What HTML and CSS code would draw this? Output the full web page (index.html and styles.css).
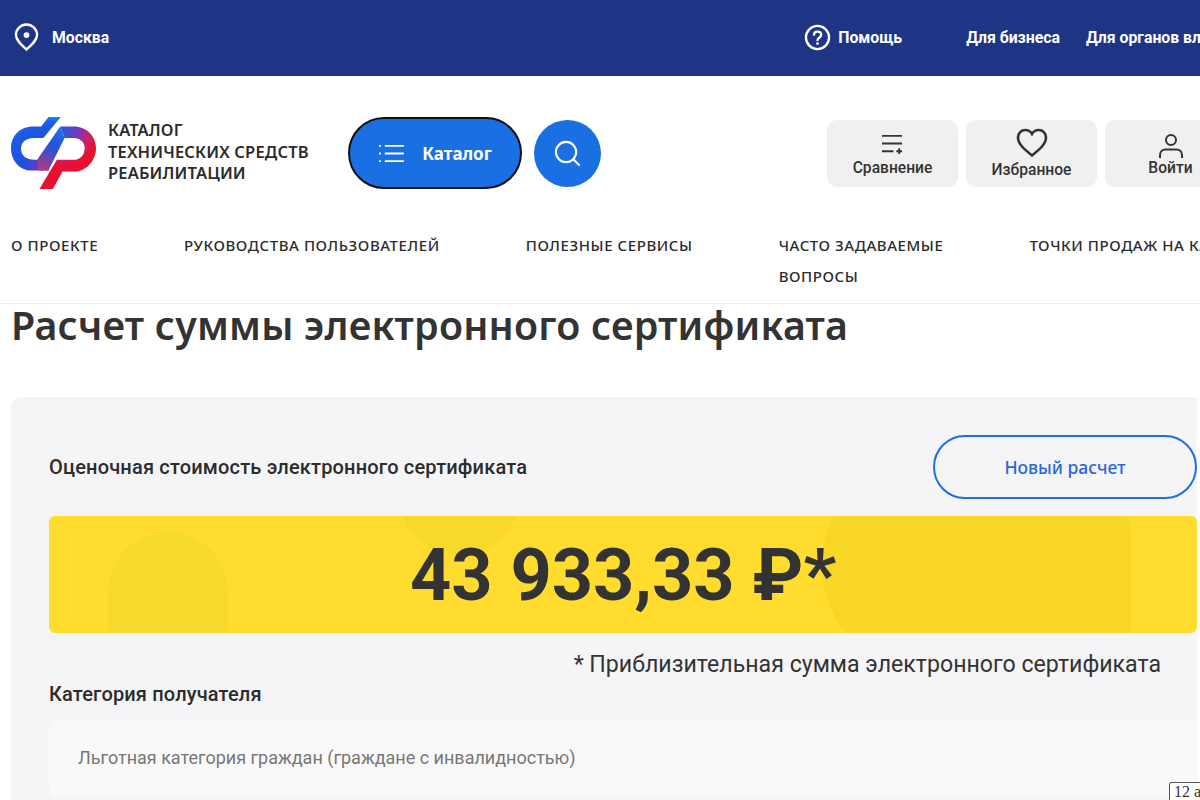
FILE: index.html
```html
<!DOCTYPE html>
<html lang="ru">
<head>
  <meta charset="UTF-8">
  <title>Расчет суммы электронного сертификата</title>
  <link rel="stylesheet" href="styles.css">
</head>
<body>
  <div class="topbar">
    <div class="topbar-city">
      <svg class="icon-pin" viewBox="0 0 26 30" fill="none" stroke="#fff" stroke-width="2.4">
        <path d="M13 27.5 C8 23 2 18 2 12.5 A11 11 0 0 1 24 12.5 C24 18 18 23 13 27.5 Z"/>
        <circle cx="13" cy="12.5" r="3" fill="#fff" stroke="none"/>
      </svg>
      <span>Москва</span>
    </div>
    <div class="topbar-links">
      <div class="topbar-help">
        <svg class="icon-help" viewBox="0 0 28 28" fill="none" stroke="#fff" stroke-width="2.4">
          <circle cx="14" cy="14" r="12"/>
          <path d="M10.4 11.2 C10.4 6.8 17.8 6.8 17.8 11.2 C17.8 14.2 14 14.2 14 16.8" stroke-linecap="round"/>
          <circle cx="14" cy="20.3" r="1.5" fill="#fff" stroke="none"/>
        </svg>
        <span>Помощь</span>
      </div>
      <span class="topbar-biz">Для бизнеса</span>
      <span class="topbar-gov">Для органов власти</span>
    </div>
  </div>

  <div class="header">
    <div class="logo">
      <svg class="logo-mark" viewBox="18 22 254 215">
        <defs>
          <radialGradient id="logo-blue" gradientUnits="userSpaceOnUse" cx="135" cy="185" r="170">
            <stop offset="0" stop-color="#c03a70"/>
            <stop offset="0.25" stop-color="#5a3ec8"/>
            <stop offset="0.5" stop-color="#1c50de"/>
            <stop offset="0.85" stop-color="#1c5ae6"/>
            <stop offset="1" stop-color="#0f96ff"/>
          </radialGradient>
          <radialGradient id="logo-red" gradientUnits="userSpaceOnUse" cx="165" cy="60" r="110">
            <stop offset="0" stop-color="#1d60e8"/>
            <stop offset="0.45" stop-color="#6a3cc0"/>
            <stop offset="0.8" stop-color="#d0206a"/>
            <stop offset="1" stop-color="#e81030"/>
          </radialGradient>
          <linearGradient id="logo-band" gradientUnits="userSpaceOnUse" x1="170" y1="50" x2="110" y2="180">
            <stop offset="0" stop-color="#1e70f0"/>
            <stop offset="0.5" stop-color="#2a50d8"/>
            <stop offset="1" stop-color="#b03a80"/>
          </linearGradient>
        </defs>
        <path fill="url(#logo-blue)" d="M130 22 H167 L138 56 L115 85 H88 C62 85 48 98 48 117 C48 136 62 150 88 150 H130 V182 H80 C42 182 18 150 18 115 C18 80 42 50 85 50 H108 Z"/>
        <path fill="url(#logo-red)" d="M103 237 H143 L172 185 H205 C245 185 272 150 272 115 C272 80 245 50 205 50 H165 L178 85 H205 C225 85 238 98 238 115 C238 135 225 150 205 150 H155 Z"/>
        <path fill="url(#logo-band)" d="M165 50 L96 150 L100 182 H130 L178 85 Z"/>
      </svg>
      <div class="logo-text">КАТАЛОГ<br>ТЕХНИЧЕСКИХ СРЕДСТВ<br>РЕАБИЛИТАЦИИ</div>
    </div>
    <button class="catalog-btn">
      <svg class="icon-list" viewBox="0 0 28 20" fill="none" stroke="#fff" stroke-width="2">
        <path d="M7 2 H27 M7 10 H27 M7 18 H27"/>
        <path d="M1 2 H3 M1 10 H3 M1 18 H3"/>
      </svg>
      <span>Каталог</span>
    </button>
    <button class="search-btn">
      <svg class="icon-search" viewBox="0 0 28 28" fill="none" stroke="#fff" stroke-width="2.2">
        <circle cx="12.5" cy="12.5" r="10.5"/>
        <path d="M20 20 L26 26" stroke-linecap="round"/>
      </svg>
    </button>
    <div class="header-actions">
      <div class="action-tile">
        <svg class="icon-compare" viewBox="0 0 22 22" fill="none" stroke="#333" stroke-width="2">
          <path d="M0 2 H21 M0 10 H21 M0 18 H12"/>
          <path d="M15 18 H21 M18 15 V21"/>
        </svg>
        <span>Сравнение</span>
      </div>
      <div class="action-tile action-fav">
        <svg class="icon-heart" viewBox="0 0 32 30" fill="none" stroke="#333" stroke-width="2.6">
          <path d="M16 27.5 C8 21 2 16 2 9.6 C2 5 5.4 2 9.2 2 C12 2 14.6 3.4 16 6 C17.4 3.4 20 2 22.8 2 C26.6 2 30 5 30 9.6 C30 16 24 21 16 27.5 Z"/>
        </svg>
        <span>Избранное</span>
      </div>
      <div class="action-tile">
        <svg class="icon-user" viewBox="0 0 24 24" fill="none" stroke="#333" stroke-width="2">
          <circle cx="12" cy="6" r="5"/>
          <path d="M1 24 V21 C1 17.5 3.5 15.5 6.5 15.5 H17.5 C20.5 15.5 23 17.5 23 21 V24"/>
        </svg>
        <span>Войти</span>
      </div>
    </div>
  </div>

  <nav class="mainnav">
    <a class="nav-item">О ПРОЕКТЕ</a>
    <a class="nav-item">РУКОВОДСТВА ПОЛЬЗОВАТЕЛЕЙ</a>
    <a class="nav-item">ПОЛЕЗНЫЕ СЕРВИСЫ</a>
    <a class="nav-item nav-faq">ЧАСТО ЗАДАВАЕМЫЕ<br>ВОПРОСЫ</a>
    <a class="nav-item">ТОЧКИ ПРОДАЖ НА КАРТЕ</a>
  </nav>

  <h1 class="page-title">Расчет суммы электронного сертификата</h1>

  <div class="calc-card">
    <div class="calc-head">
      <div class="calc-label">Оценочная стоимость электронного сертификата</div>
      <button class="new-calc">Новый расчет</button>
    </div>
    <div class="sum-banner">
      <div class="shape-arch"></div>
      <div class="shape-circle"></div>
      <div class="shape-round"></div>
      <div class="shape-wide"></div>
      <div class="sum-value">43 933,33 ₽*</div>
    </div>
    <div class="sum-note">* Приблизительная сумма электронного сертификата</div>
    <div class="field-label">Категория получателя</div>
    <div class="field-box">Льготная категория граждан (граждане с инвалидностью)</div>
  </div>

  <div class="tip">12 а</div>
</body>
</html>
```

FILE: styles.css
```css
html, body {
  margin: 0;
  height: 800px;
  overflow: hidden;
}
body {
  position: relative;
  width: 1200px;
  background: #fff;
  font-family: Roboto, sans-serif;
  color: #333;
}
button {
  border: none;
  padding: 0;
  font-family: inherit;
}

/* top bar */
.topbar {
  display: flex;
  align-items: center;
  height: 76px;
  padding-left: 14px;
  padding-bottom: 2px;
  box-sizing: border-box;
  background: #1e3585;
  color: #fff;
  font-size: 15.8px;
  font-weight: 700;
  white-space: nowrap;
}
.topbar-city {
  display: flex;
  align-items: center;
  gap: 13px;
}
.icon-pin {
  width: 25px;
  height: 29px;
}
.topbar-links {
  display: flex;
  align-items: center;
  margin-left: 695px;
}
.topbar-help {
  display: flex;
  align-items: center;
  gap: 7px;
}
.icon-help {
  width: 27px;
  height: 27px;
}
.topbar-biz {
  margin-left: 64px;
}
.topbar-gov {
  margin-left: 26px;
}

/* header */
.header {
  display: flex;
  align-items: center;
  height: 154px;
  padding-left: 11px;
  white-space: nowrap;
}
.logo {
  display: flex;
  flex: none;
  align-items: center;
  gap: 12px;
  width: 337px;
}
.logo-mark {
  width: 85px;
  height: 72px;
}
.logo-text {
  padding-bottom: 3px;
  font-family: "Noto Sans", sans-serif;
  font-size: 16.5px;
  font-weight: 600;
  line-height: 21.5px;
  letter-spacing: 0.15px;
  color: #2c2c2c;
}
.catalog-btn {
  display: flex;
  flex: none;
  align-items: center;
  justify-content: center;
  gap: 17px;
  width: 174px;
  height: 72px;
  border: 2px solid #111;
  border-radius: 36px;
  background: #1a6fe3;
  color: #fff;
  font-family: "Noto Sans", sans-serif;
  font-size: 17px;
  font-weight: 700;
}
.icon-list {
  width: 27px;
  height: 19px;
}
.search-btn {
  display: flex;
  flex: none;
  align-items: center;
  justify-content: center;
  width: 67px;
  height: 67px;
  margin-left: 12px;
  border-radius: 50%;
  background: #1a6fe3;
}
.icon-search {
  width: 27px;
  height: 27px;
}
.header-actions {
  display: flex;
  flex: none;
  gap: 8px;
  margin-left: 226px;
}
.action-tile {
  display: flex;
  flex-direction: column;
  align-items: center;
  justify-content: flex-end;
  flex: none;
  width: 131px;
  height: 67px;
  padding-bottom: 10px;
  box-sizing: border-box;
  border-radius: 10px;
  background: #f0f0f0;
  font-size: 15.6px;
  font-weight: 500;
}
.action-fav {
  padding-bottom: 8px;
}
.icon-compare {
  width: 21px;
  height: 21px;
  margin-bottom: 4px;
}
.icon-heart {
  width: 32px;
  height: 30px;
  margin-bottom: 3px;
}
.icon-user {
  width: 24px;
  height: 24px;
  margin-bottom: 1px;
}

/* main nav */
.mainnav {
  display: flex;
  align-items: flex-start;
  gap: 86px;
  height: 73px;
  padding-left: 11px;
  border-bottom: 1px solid #eee;
  color: #2c2c2c;
  font-family: "Noto Sans", sans-serif;
  font-size: 15px;
  font-weight: 500;
  line-height: 31px;
  letter-spacing: 0.57px;
  white-space: nowrap;
}
.nav-faq {
  width: 165px;
}

/* title */
.page-title {
  margin: -2px 0 49px 11px;
  font-family: "Noto Sans", sans-serif;
  font-size: 39.4px;
  font-weight: 600;
  line-height: 46px;
  letter-spacing: 0.2px;
  white-space: nowrap;
}

/* calc card */
.calc-card {
  width: 1186px;
  height: 420px;
  margin-left: 11px;
  padding: 38px 0 0 38px;
  box-sizing: border-box;
  border-radius: 10px 0 0 0;
  background: #f5f5f8;
}
.calc-head {
  display: flex;
  align-items: center;
  justify-content: space-between;
  width: 1148px;
  height: 64px;
}
.calc-label {
  font-size: 20px;
  font-weight: 500;
  letter-spacing: 0.18px;
  color: #2c2c2c;
}
.new-calc {
  width: 264px;
  height: 64px;
  border: 2px solid #1a6fe3;
  border-radius: 32px;
  background: transparent;
  color: #2a66dc;
  font-family: "Noto Sans", sans-serif;
  font-size: 17.5px;
  font-weight: 500;
}
.sum-banner {
  position: relative;
  overflow: hidden;
  width: 1148px;
  height: 117px;
  margin-top: 17px;
  border-radius: 6px;
  background: #ffdc2d;
}
.shape-arch {
  position: absolute;
  left: 59px;
  top: 16px;
  width: 120px;
  height: 110px;
  border-radius: 60px 60px 0 0;
  background: #f7d92c;
}
.shape-circle {
  position: absolute;
  left: 352px;
  top: -62px;
  width: 116px;
  height: 100px;
  border-radius: 50%;
  background: #f7d92c;
}
.shape-round {
  position: absolute;
  left: 773px;
  top: -61px;
  width: 220px;
  height: 220px;
  border-radius: 50%;
  background: #f7d625;
}
.shape-wide {
  position: absolute;
  left: 883px;
  top: 0;
  width: 198px;
  height: 117px;
  border-radius: 0 8px 0 0;
  background: #f7d625;
}
.sum-value {
  position: relative;
  padding-top: 1px;
  font-size: 72px;
  font-weight: 700;
  line-height: 117px;
  text-align: center;
}
.sum-note {
  width: 1112px;
  margin-top: 19px;
  font-size: 23.15px;
  line-height: 26px;
  text-align: right;
}
.field-label {
  margin-top: 4px;
  font-size: 20px;
  font-weight: 500;
  line-height: 24px;
  letter-spacing: 0.15px;
  color: #2c2c2c;
}
.field-box {
  width: 1148px;
  height: 77px;
  margin-top: 14px;
  padding-left: 29px;
  box-sizing: border-box;
  border-radius: 8px;
  background: #f9f9fa;
  color: #777;
  font-size: 18px;
  line-height: 76px;
}

/* tooltip in the corner */
.tip {
  position: absolute;
  left: 1169px;
  top: 782px;
  width: 40px;
  height: 24px;
  padding-left: 4px;
  box-sizing: border-box;
  border: 1px solid #555;
  border-radius: 2px;
  background: #fff;
  font-family: "Liberation Serif", serif;
  font-size: 16px;
  white-space: nowrap;
}
```
